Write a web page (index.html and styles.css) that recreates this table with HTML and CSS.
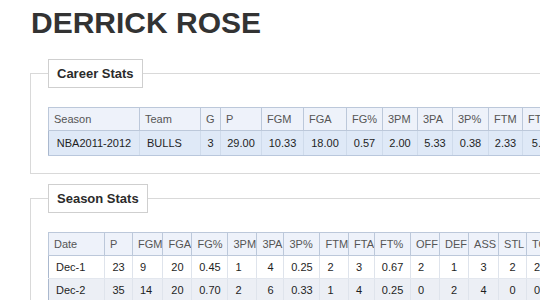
FILE: index.html
```html
<!DOCTYPE html>
<html lang="en">
<head>
<meta charset="utf-8">
<title>Derrick Rose</title>
<link rel="stylesheet" href="styles.css">
</head>
<body>
<div class="page">
  <h1 class="name">DERRICK ROSE</h1>

  <fieldset class="panel">
    <legend class="panel-title">Career Stats</legend>
    <table class="grid career">
      <colgroup>
        <col class="w91"><col class="w61"><col class="w20"><col class="w41"><col class="w42"><col class="w43"><col class="w36"><col class="w35"><col class="w35"><col class="w36"><col class="w34"><col class="w40"><col class="w40">
      </colgroup>
      <thead>
        <tr><th>Season</th><th>Team</th><th>G</th><th>P</th><th>FGM</th><th>FGA</th><th>FG%</th><th>3PM</th><th>3PA</th><th>3P%</th><th>FTM</th><th>FTA</th><th>FT%</th></tr>
      </thead>
      <tbody>
        <tr class="selected"><td>NBA2011-2012</td><td class="left">BULLS</td><td>3</td><td>29.00</td><td>10.33</td><td>18.00</td><td>0.57</td><td>2.00</td><td>5.33</td><td>0.38</td><td>2.33</td><td>5.00</td><td>0.47</td></tr>
      </tbody>
    </table>
  </fieldset>

  <fieldset class="panel">
    <legend class="panel-title">Season Stats</legend>
    <table class="grid season">
      <colgroup>
        <col class="w56"><col class="w28"><col class="w30"><col class="w29"><col class="w36"><col class="w29"><col class="w27"><col class="w36"><col class="w28"><col class="w26"><col class="w36"><col class="w29"><col class="w29"><col class="w30"><col class="w28"><col class="w30">
      </colgroup>
      <thead>
        <tr><th>Date</th><th>P</th><th>FGM</th><th>FGA</th><th>FG%</th><th>3PM</th><th>3PA</th><th>3P%</th><th>FTM</th><th>FTA</th><th>FT%</th><th>OFF</th><th>DEF</th><th>ASS</th><th>STL</th><th>TO</th></tr>
      </thead>
      <tbody>
        <tr><td>Dec-1</td><td class="mid">23</td><td>9</td><td class="mid">20</td><td class="mid">0.45</td><td>1</td><td class="mid">4</td><td class="mid">0.25</td><td>2</td><td>3</td><td class="mid">0.67</td><td>2</td><td class="mid">1</td><td class="mid">3</td><td class="mid">2</td><td>2</td></tr>
        <tr class="alt"><td>Dec-2</td><td class="mid">35</td><td>14</td><td class="mid">20</td><td class="mid">0.70</td><td>2</td><td class="mid">6</td><td class="mid">0.33</td><td>1</td><td>4</td><td class="mid">0.25</td><td>0</td><td class="mid">2</td><td class="mid">4</td><td class="mid">0</td><td>0</td></tr>
        <tr><td>Dec-3</td><td class="mid">18</td><td>7</td><td class="mid">16</td><td class="mid">0.44</td><td>0</td><td class="mid">2</td><td class="mid">0.00</td><td>4</td><td>5</td><td class="mid">0.80</td><td>1</td><td class="mid">3</td><td class="mid">6</td><td class="mid">1</td><td>3</td></tr>
      </tbody>
    </table>
  </fieldset>
</div>
</body>
</html>
```
FILE: styles.css
```css
html, body {
  margin: 0;
  padding: 0;
  overflow: hidden;
  background: #ffffff;
}

.page {
  width: 760px;
  padding: 8px 0 0 30px;
  font-family: "Liberation Sans", Arial, sans-serif;
  color: #222;
}

.name {
  margin: 0 0 0 1px;
  font-size: 30px;
  line-height: 30px;
  font-weight: bold;
  color: #333333;
}

.panel {
  margin: 21px 0 10px 0;
  padding: 19px 17px 17px 17px;
  border: 1px solid #d9d9d9;
  min-width: 0;
}

.panel + .panel {
  margin-top: 10px;
}

.panel-title {
  padding: 0 8px;
  margin: 0;
  border: 1px solid #cfcfcf;
  background: #ffffff;
  font-size: 13px;
  line-height: 27px;
  font-weight: bold;
  color: #2b2b2b;
}

.grid {
  border-collapse: collapse;
  border: 1px solid #aab8ce;
  font-size: 11px;
}

.grid th {
  height: 22px;
  padding: 0 0 0 5px;
  text-align: left;
  font-weight: normal;
  color: #555555;
  background: #eef2fa;
  border: 1px solid #bcc8da;
  white-space: nowrap;
  overflow: hidden;
}

.grid td {
  height: 22px;
  padding: 0 0 0 7px;
  text-align: left;
  color: #1e1e1e;
  border-right: 1px solid #dfe4ec;
  border-bottom: 1px solid #e3e7ee;
  white-space: nowrap;
  overflow: hidden;
}

.career td {
  height: 24px;
  padding: 0;
  text-align: center;
}

.career td.left {
  text-align: left;
  padding-left: 7px;
}

.career .selected td {
  background: #dfe9f7;
  border-right-color: #cfdbeb;
  border-bottom: 1px solid #b9c7dc;
}

.season td.mid {
  padding: 0;
  text-align: center;
}

.season .alt td {
  background: #eceff5;
}

.w20 { width: 20px; }
.w26 { width: 26px; }
.w27 { width: 27px; }
.w28 { width: 28px; }
.w29 { width: 29px; }
.w30 { width: 30px; }
.w34 { width: 34px; }
.w35 { width: 35px; }
.w36 { width: 36px; }
.w40 { width: 40px; }
.w41 { width: 41px; }
.w42 { width: 42px; }
.w43 { width: 43px; }
.w56 { width: 56px; }
.w61 { width: 61px; }
.w91 { width: 91px; }
```
